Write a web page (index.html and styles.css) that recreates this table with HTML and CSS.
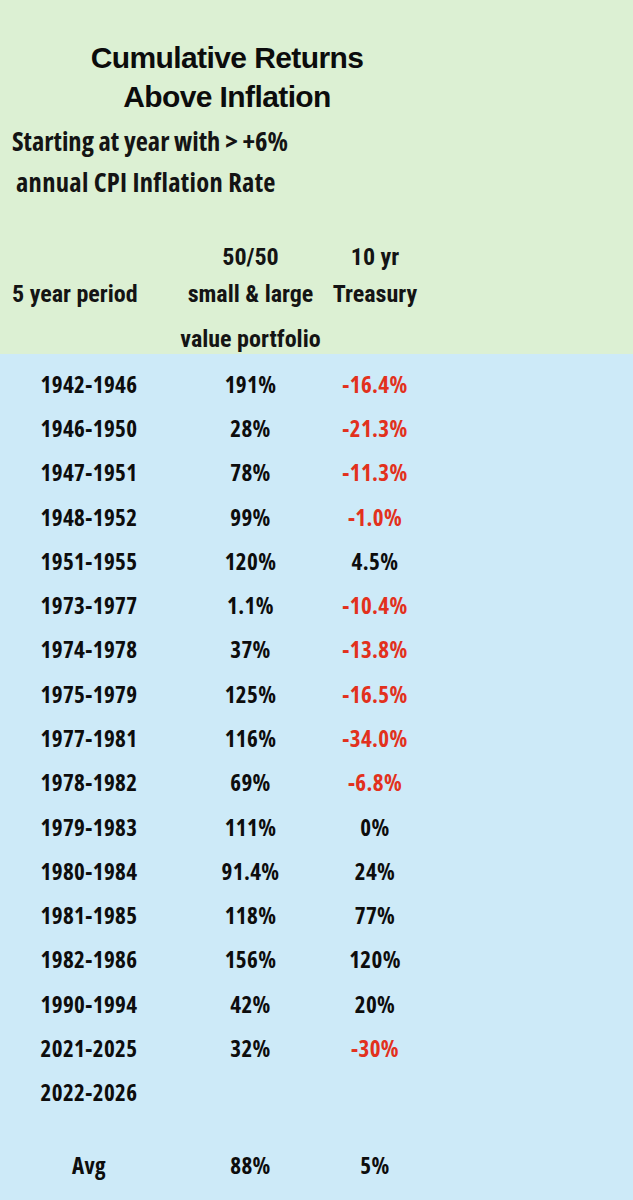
FILE: index.html
```html
<!DOCTYPE html>
<html lang="en">
<head>
<meta charset="utf-8">
<title>Cumulative Returns Above Inflation</title>
<link rel="stylesheet" href="styles.css">
</head>
<body>
<div class="page">
  <section class="top">
    <h1 class="title">Cumulative Returns<br>Above Inflation</h1>
    <p class="subtitle">Starting at year with &gt; +6%<br><span class="indent">annual CPI Inflation Rate</span></p>
    <div class="head">
      <div class="hrow hrow-a"><span class="c1"></span><span class="c2">50/50</span><span class="c3">10 yr</span></div>
      <div class="hrow hrow-b"><span class="c1 left">5 year period</span><span class="c2">small &amp; large</span><span class="c3">Treasury</span></div>
      <div class="hrow hrow-c"><span class="c1"></span><span class="c2">value portfolio</span><span class="c3"></span></div>
    </div>
  </section>
  <section class="data">
    <div class="row"><span class="c1">1942-1946</span><span class="c2">191%</span><span class="c3 neg">-16.4%</span></div>
    <div class="row"><span class="c1">1946-1950</span><span class="c2">28%</span><span class="c3 neg">-21.3%</span></div>
    <div class="row"><span class="c1">1947-1951</span><span class="c2">78%</span><span class="c3 neg">-11.3%</span></div>
    <div class="row"><span class="c1">1948-1952</span><span class="c2">99%</span><span class="c3 neg">-1.0%</span></div>
    <div class="row"><span class="c1">1951-1955</span><span class="c2">120%</span><span class="c3">4.5%</span></div>
    <div class="row"><span class="c1">1973-1977</span><span class="c2">1.1%</span><span class="c3 neg">-10.4%</span></div>
    <div class="row"><span class="c1">1974-1978</span><span class="c2">37%</span><span class="c3 neg">-13.8%</span></div>
    <div class="row"><span class="c1">1975-1979</span><span class="c2">125%</span><span class="c3 neg">-16.5%</span></div>
    <div class="row"><span class="c1">1977-1981</span><span class="c2">116%</span><span class="c3 neg">-34.0%</span></div>
    <div class="row"><span class="c1">1978-1982</span><span class="c2">69%</span><span class="c3 neg">-6.8%</span></div>
    <div class="row"><span class="c1">1979-1983</span><span class="c2">111%</span><span class="c3">0%</span></div>
    <div class="row"><span class="c1">1980-1984</span><span class="c2">91.4%</span><span class="c3">24%</span></div>
    <div class="row"><span class="c1">1981-1985</span><span class="c2">118%</span><span class="c3">77%</span></div>
    <div class="row"><span class="c1">1982-1986</span><span class="c2">156%</span><span class="c3">120%</span></div>
    <div class="row"><span class="c1">1990-1994</span><span class="c2">42%</span><span class="c3">20%</span></div>
    <div class="row"><span class="c1">2021-2025</span><span class="c2">32%</span><span class="c3 neg">-30%</span></div>
    <div class="row"><span class="c1">2022-2026</span><span class="c2"></span><span class="c3"></span></div>
    <div class="row avg"><span class="c1">Avg</span><span class="c2">88%</span><span class="c3">5%</span></div>
  </section>
</div>
</body>
</html>
```

FILE: styles.css
```css
* { box-sizing: border-box; }

html, body {
  margin: 0;
  padding: 0;
}

body {
  width: 633px;
  height: 1200px;
  overflow: hidden;
  background: #cdeaf8;
  color: #111;
  font-family: "Liberation Sans", Arial, sans-serif;
}

.page {
  display: flex;
  flex-direction: column;
  height: 1200px;
}

.top {
  background: #dcf0d3;
  height: 354px;
  padding-top: 38px;
}

.title {
  margin: 0;
  width: 454px;
  text-align: center;
  font-family: "Liberation Sans", Arial, sans-serif;
  font-weight: 700;
  font-size: 30px;
  line-height: 39px;
  letter-spacing: -0.6px;
  color: #0c0c0c;
}

.subtitle {
  margin: 5px 0 0 0;
  padding-left: 12px;
  font-family: "Open Sans", sans-serif;
  font-stretch: 75%;
  font-weight: 700;
  font-size: 26.5px;
  line-height: 41px;
  color: #141414;
}

.indent {
  padding-left: 4px;
  letter-spacing: 0.3px;
}

.head {
  margin-top: 36px;
  font-family: "Roboto", sans-serif;
  font-stretch: 75%;
  font-weight: 700;
  font-size: 24px;
  color: #141414;
}

.hrow,
.row {
  display: grid;
  grid-template-columns: 178px 145px 104px;
}

.hrow { line-height: 37px; }
.hrow-c { margin-top: 12px; line-height: 29px; }

.c1, .c2, .c3 {
  text-align: center;
  white-space: nowrap;
}

.c1.left {
  text-align: left;
  padding-left: 12px;
}

.data {
  padding-top: 7.9px;
  font-family: "Open Sans", sans-serif;
  font-stretch: 87.5%;
  font-weight: 700;
  font-size: 23px;
  letter-spacing: 0.4px;
  color: #0d0d0d;
}

.row {
  height: 44.27px;
  line-height: 44.27px;
}

.row.avg {
  margin-top: 28.4px;
}

.neg {
  color: #e2311d;
}
```
